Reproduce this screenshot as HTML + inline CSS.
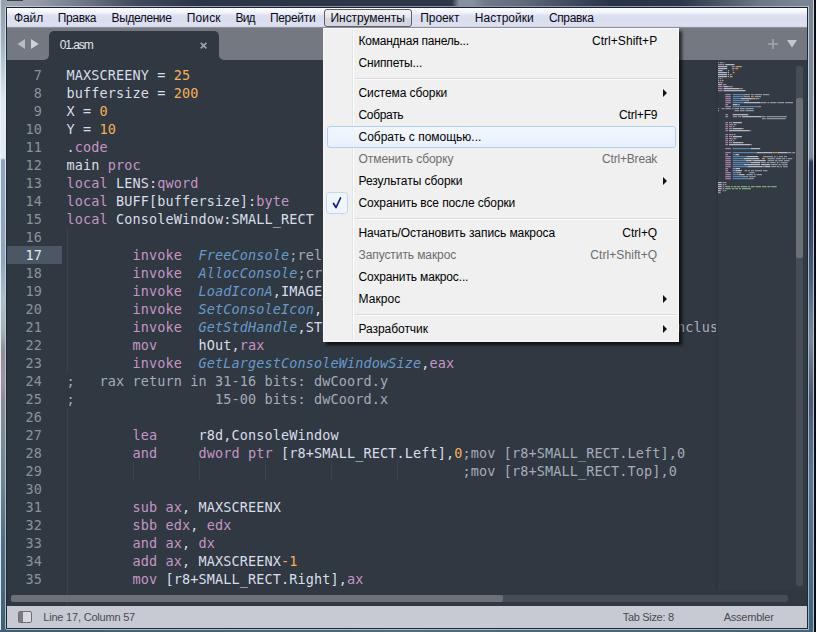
<!DOCTYPE html>
<html lang="ru">
<head>
<meta charset="utf-8">
<title>01.asm - Sublime Text</title>
<style>
html,body{margin:0;padding:0;}
body{width:816px;height:632px;overflow:hidden;position:relative;background:#303841;font-family:"Liberation Sans",sans-serif;font-size:12px;}
.a{position:absolute;}
.t{position:absolute;white-space:pre;line-height:14px;height:14px;}
#ftop{left:0;top:0;width:816px;height:6px;background:linear-gradient(90deg,#9ea6b0 0px,#959da8 35px,#6c7686 85px,#404a5e 135px,#2b3549 200px,#2e384a 452px,#8590a0 459px,#8590a0 473px,#6f798b 485px,#626c7e 520px,#3c465a 578px,#2a3448 612px,#2c364a 680px,#4a5568 720px,#6c7787 760px,#7a8594 800px,#7a8594 816px);}
#ftop2{left:6px;top:6px;width:803px;height:1px;background:linear-gradient(90deg,#c4ccd6 0px,#aab3c0 150px,#8792a6 300px,#8a96aa 600px,#b0b8c4 803px);}
#ftop3{left:6px;top:7px;width:802px;height:1px;background:#1a212c;}
#fleft{left:0;top:0;width:6px;height:632px;background:linear-gradient(180deg,#93a0ad 0px,#9fb0bf 40px,#c9d6e2 80px,#dde7f1 100px,#e3ecf5 158px,#8ea6c6 160px,#8da4c2 220px,#8fa5bd 260px,#a9c0cc 300px,#a8b4b4 330px,#8f8f92 350px,#a093a0 380px,#8c8a95 400px,#7a8a92 440px,#6d8794 480px,#4f6f84 540px,#3f6076 632px);}
#fleft0{left:0;top:0;width:1px;height:632px;background:linear-gradient(180deg,#cfd8e0 0,#eef3f8 100px,#e8eef5 300px,#dfe8ee 632px);}
#fleft2{left:5px;top:7px;width:1px;height:622px;background:linear-gradient(180deg,#c9d2dc 0,#e9f0f7 100px,#dbe6f0 160px,#b9c8da 300px,#a8bccb 632px);}
#fleft3{left:6px;top:7px;width:1px;height:622px;background:#1f2731;}
#fright{left:809px;top:0;width:4px;height:632px;background:linear-gradient(180deg,#7a8594 0px,#7c8797 60px,#7f8a9c 150px,#7986a0 158px,#2c3b5c 162px,#33425f 220px,#50607a 280px,#6b7c93 316px,#7a8894 340px,#5d6378 380px,#4e5672 400px,#566a84 440px,#5b7890 480px,#4d6f86 560px,#43657b 632px);}
#fright1{left:808px;top:6px;width:1px;height:624px;background:linear-gradient(180deg,#c3cad4 0,#c6ced9 150px,#a9b8d0 165px,#9fb0c8 632px);}
#fright0{left:807px;top:7px;width:1px;height:622px;background:#1f2731;}
#fright2{left:813px;top:0;width:1px;height:632px;background:linear-gradient(180deg,#c8cfd8 0,#d5dde8 150px,#b6c4dc 170px,#aebfd2 632px);}
#fright3{left:814px;top:0;width:2px;height:632px;background:#0b0e13;}
#fbot{left:0;top:630px;width:814px;height:2px;background:linear-gradient(90deg,#3d5f75,#4a6c82 400px,#43657b);}
#fbot1{left:6px;top:629px;width:803px;height:1px;background:#a9bdca;}
#fbot0{left:6px;top:628px;width:802px;height:1px;background:#1f2731;}
/* menubar */
#mbar{left:7px;top:8px;width:800px;height:18px;background:linear-gradient(180deg,#ffffff 0px,#f6f7fc 3px,#e9ecf7 6px,#dde1f1 7px,#d9deef 12px,#dce0f0 18px);}
#mbar1{left:7px;top:26px;width:800px;height:1px;background:#d2d5e2;}
#mbar2{left:7px;top:27px;width:800px;height:1px;background:#90939d;}
#mbtn{left:324px;top:9px;width:86px;height:16px;border:1px solid #5f6063;border-radius:3px;background:linear-gradient(180deg,#f4f4f6 0,#e6e7ec 45%,#d6d8e0 50%,#d4d6df 100%);box-sizing:content-box;}
/* tab bar */
#tabbar{left:7px;top:28px;width:800px;height:32px;background:#747981;}
#tab{left:49px;top:31px;width:170px;height:29px;background:#303841;border-radius:5px 5px 0 0;}
.tabfoot{width:5px;height:5px;top:55px;background:#303841;}
.tabfoot i{display:block;width:5px;height:5px;background:#747981;}
/* editor */
#ed{left:7px;top:60px;width:800px;height:546px;background:#303841;}
.code{font-family:"DejaVu Sans Mono","Liberation Mono",monospace;font-size:13.5px;letter-spacing:0.123px;line-height:18px;white-space:pre;color:#d8dee9;}
.code i{font-style:italic;color:#6699cc;}
.s{color:#99c794;} .r{color:#c695c6;} .k{color:#c695c6;} .n{color:#f9ae58;} .c{color:#a6acb9;}
.ln{position:absolute;left:7px;width:35px;text-align:right;height:18px;color:#8991a0;}
.cl{position:absolute;left:66.4px;height:18px;}
.g{position:absolute;width:1px;background-image:linear-gradient(180deg,#454d56 50%,rgba(0,0,0,0) 50%);background-size:1px 2px;}
.mm{transform-origin:0 0;transform:scale(0.11111);width:900px;font-weight:bold;}
/* status */
#status{left:7px;top:606px;width:800px;height:22px;background:#c7cad2;}
/* popup */
#pop{left:323px;top:28px;width:355.5px;height:314px;background:#f0f0f0;box-shadow:3px 3px 3px rgba(0,0,0,0.68);}
#popb{left:323px;top:28px;width:354px;height:312px;border:1px solid #f8f8f8;}
.sepv1{left:352px;top:31px;width:1px;height:308px;background:#e2e3e3;}
.sepv2{left:353px;top:31px;width:1px;height:308px;background:#ffffff;}
.seph{left:355px;width:321px;height:1px;background:#d9d9d9;border-bottom:1px solid #fcfcfc;}
.arr{width:0;height:0;border-left:4px solid #111;border-top:4px solid transparent;border-bottom:4px solid transparent;left:663px;}
#hl{left:327px;top:126px;width:347px;height:20px;border:1px solid #aecff7;border-radius:3px;background:linear-gradient(180deg,#f2f7fd,#e8f1fc);}
</style>
</head>
<body>
<div id="mbar" class="a"></div><div id="mbar1" class="a"></div><div id="mbar2" class="a"></div>
<div id="mbtn" class="a"></div>
<span class="t" style="left:14.10px;top:11.33px;font:12px 'Liberation Sans';line-height:14px;letter-spacing:-0.154px;color:#0a0a14;">Файл</span>
<span class="t" style="left:57.70px;top:11.33px;font:12px 'Liberation Sans';line-height:14px;letter-spacing:-0.341px;color:#0a0a14;">Правка</span>
<span class="t" style="left:111.60px;top:11.33px;font:12px 'Liberation Sans';line-height:14px;letter-spacing:-0.422px;color:#0a0a14;">Выделение</span>
<span class="t" style="left:186.80px;top:11.33px;font:12px 'Liberation Sans';line-height:14px;letter-spacing:0.127px;color:#0a0a14;">Поиск</span>
<span class="t" style="left:235.60px;top:11.33px;font:12px 'Liberation Sans';line-height:14px;letter-spacing:-0.873px;color:#0a0a14;">Вид</span>
<span class="t" style="left:269.90px;top:11.33px;font:12px 'Liberation Sans';line-height:14px;letter-spacing:-0.309px;color:#0a0a14;">Перейти</span>
<span class="t" style="left:330.50px;top:11.33px;font:12px 'Liberation Sans';line-height:14px;letter-spacing:-0.057px;color:#0a0a14;">Инструменты</span>
<span class="t" style="left:420.20px;top:11.33px;font:12px 'Liberation Sans';line-height:14px;letter-spacing:-0.055px;color:#0a0a14;">Проект</span>
<span class="t" style="left:474.80px;top:11.33px;font:12px 'Liberation Sans';line-height:14px;letter-spacing:0.006px;color:#0a0a14;">Настройки</span>
<span class="t" style="left:548.90px;top:11.33px;font:12px 'Liberation Sans';line-height:14px;letter-spacing:-0.354px;color:#0a0a14;">Справка</span>
<div id="tabbar" class="a"></div>
<div id="tab" class="a"></div>
<div class="a tabfoot" style="left:44px"><i style="border-radius:0 0 5px 0"></i></div>
<div class="a tabfoot" style="left:219px"><i style="border-radius:0 0 0 5px"></i></div>
<svg class="a" style="left:7px;top:28px" width="800" height="32" viewBox="7 28 800 32"><polygon points="17.5,44 25,39 25,49" fill="#b9bcc1"/><polygon points="38.7,44 31,39 31,49" fill="#cfd1d5"/><path d="M200.8 42.8 L206.4 48.4 M206.4 42.8 L200.8 48.4" stroke="#9ea2a8" stroke-width="1.7" fill="none"/><path d="M768 44 H778 M773 39 V49" stroke="#a3a7ad" stroke-width="1.6" fill="none"/><polygon points="787,40 797,40 792,47.6" fill="#c3c6ca"/></svg>
<span class="t" style="left:59.70px;top:37.63px;font:12px 'Liberation Sans';line-height:14px;letter-spacing:-1.060px;color:#e6e8ea;">01.asm</span>
<div id="ed" class="a"></div>
<div class="a" style="left:7px;top:246px;width:55px;height:18px;background:#4b5764"></div>
<div class="code a" style="left:0;top:60px;width:717px;height:546px;overflow:hidden"><div class="a" style="left:0;top:-60px">
<div class="ln" style="top:66px;color:#8a929e">7</div>
<div class="cl" style="top:66px">MAXSCREENY = <span class="n">25</span></div>
<div class="ln" style="top:84px;color:#8a929e">8</div>
<div class="cl" style="top:84px">buffersize = <span class="n">200</span></div>
<div class="ln" style="top:102px;color:#8a929e">9</div>
<div class="cl" style="top:102px">X = <span class="n">0</span></div>
<div class="ln" style="top:120px;color:#8a929e">10</div>
<div class="cl" style="top:120px">Y = <span class="n">10</span></div>
<div class="ln" style="top:138px;color:#8a929e">11</div>
<div class="cl" style="top:138px">.<span class="k">code</span></div>
<div class="ln" style="top:156px;color:#8a929e">12</div>
<div class="cl" style="top:156px">main <span class="k">proc</span></div>
<div class="ln" style="top:174px;color:#8a929e">13</div>
<div class="cl" style="top:174px"><span class="k">local</span> LENS:<span class="k">qword</span></div>
<div class="ln" style="top:192px;color:#8a929e">14</div>
<div class="cl" style="top:192px"><span class="k">local</span> BUFF[buffersize]:<span class="k">byte</span></div>
<div class="ln" style="top:210px;color:#8a929e">15</div>
<div class="cl" style="top:210px"><span class="k">local</span> ConsoleWindow:SMALL_RECT</div>
<div class="ln" style="top:228px;color:#8a929e">16</div>
<div class="ln" style="top:246px;color:#e3e8ef">17</div>
<div class="cl" style="top:246px">        <span class="k">invoke</span>  <i>FreeConsole</i><span class="c">;release the existing console</span></div>
<div class="ln" style="top:264px;color:#8a929e">18</div>
<div class="cl" style="top:264px">        <span class="k">invoke</span>  <i>AllocConsole</i><span class="c">;create new console</span></div>
<div class="ln" style="top:282px;color:#8a929e">19</div>
<div class="cl" style="top:282px">        <span class="k">invoke</span>  <i>LoadIconA</i>,IMAGE_BASE,<span class="n">1000</span><span class="c">;ico</span></div>
<div class="ln" style="top:300px;color:#8a929e">20</div>
<div class="cl" style="top:300px">        <span class="k">invoke</span>  <i>SetConsoleIcon</i>,<span class="r">rax</span></div>
<div class="ln" style="top:318px;color:#8a929e">21</div>
<div class="cl" style="top:318px">        <span class="k">invoke</span>  <i>GetStdHandle</i>,STD_OUTPUT_HANDLE<span class="c">;handle to console output, inclusive</span></div>
<div class="ln" style="top:336px;color:#8a929e">22</div>
<div class="cl" style="top:336px">        <span class="k">mov</span>     hOut,<span class="r">rax</span></div>
<div class="ln" style="top:354px;color:#8a929e">23</div>
<div class="cl" style="top:354px">        <span class="k">invoke</span>  <i>GetLargestConsoleWindowSize</i>,<span class="r">eax</span></div>
<div class="ln" style="top:372px;color:#8a929e">24</div>
<div class="cl" style="top:372px"><span class="c">;   rax return in 31-16 bits: dwCoord.y</span></div>
<div class="ln" style="top:390px;color:#8a929e">25</div>
<div class="cl" style="top:390px"><span class="c">;                 15-00 bits: dwCoord.x</span></div>
<div class="ln" style="top:408px;color:#8a929e">26</div>
<div class="ln" style="top:426px;color:#8a929e">27</div>
<div class="cl" style="top:426px">        <span class="k">lea</span>     r8d,ConsoleWindow</div>
<div class="ln" style="top:444px;color:#8a929e">28</div>
<div class="cl" style="top:444px">        <span class="k">and</span>     <span class="k">dword</span> <span class="k">ptr</span> [r8+SMALL_RECT.Left],<span class="n">0</span><span class="c">;mov [r8+SMALL_RECT.Left],0</span></div>
<div class="ln" style="top:462px;color:#8a929e">29</div>
<div class="cl" style="top:462px">                                                <span class="c">;mov [r8+SMALL_RECT.Top],0</span></div>
<div class="ln" style="top:480px;color:#8a929e">30</div>
<div class="ln" style="top:498px;color:#8a929e">31</div>
<div class="cl" style="top:498px">        <span class="k">sub</span> <span class="r">ax</span>, MAXSCREENX</div>
<div class="ln" style="top:516px;color:#8a929e">32</div>
<div class="cl" style="top:516px">        <span class="k">sbb</span> <span class="r">edx</span>, <span class="r">edx</span></div>
<div class="ln" style="top:534px;color:#8a929e">33</div>
<div class="cl" style="top:534px">        <span class="k">and</span> <span class="r">ax</span>, <span class="r">dx</span></div>
<div class="ln" style="top:552px;color:#8a929e">34</div>
<div class="cl" style="top:552px">        <span class="k">add</span> <span class="r">ax</span>, MAXSCREENX<span class="n">-1</span></div>
<div class="ln" style="top:570px;color:#8a929e">35</div>
<div class="cl" style="top:570px">        <span class="k">mov</span> [r8+SMALL_RECT.Right],<span class="r">ax</span></div>
</div></div>
<div class="g" style="left:67px;top:228px;height:144px"></div>
<div class="g" style="left:67px;top:408px;height:198px"></div>
<div class="g" style="left:133px;top:462px;height:18px"></div>
<div class="g" style="left:199px;top:462px;height:18px"></div>
<div class="g" style="left:265px;top:462px;height:18px"></div>
<div class="g" style="left:331px;top:462px;height:18px"></div>
<div class="g" style="left:397px;top:462px;height:18px"></div>
<div class="a" style="left:718px;top:60px;width:89px;height:530px;background:#323a43"></div>
<div class="a" style="left:715.5px;top:60px;width:2.5px;height:530px;background:#2c343c"></div>
<svg class="a" style="left:717px;top:60px;opacity:0.78" width="80" height="140" viewBox="717 60 80 140"><path fill="#d8dee9" d="M725.3 64h9.2v1.25h-9.2zM718.0 66h9.2v1.25h-9.2zM718.0 68h9.2v1.25h-9.2zM718.0 70h4.6v1.25h-4.6zM728.1 70h0.9v1.25h-0.9zM718.0 72h9.2v1.25h-9.2zM728.1 72h0.9v1.25h-0.9zM718.0 74h9.2v1.25h-9.2zM728.1 74h0.9v1.25h-0.9zM718.0 76h9.2v1.25h-9.2zM728.1 76h0.9v1.25h-0.9zM718.0 78h0.9v1.25h-0.9zM719.8 78h0.9v1.25h-0.9zM718.0 80h0.9v1.25h-0.9zM719.8 80h0.9v1.25h-0.9zM718.0 82h0.9v1.25h-0.9zM718.0 84h3.7v1.25h-3.7zM723.5 86h4.6v1.25h-4.6zM723.5 88h15.6v1.25h-15.6zM723.5 90h22.0v1.25h-22.0zM740.9 98h11.0v1.25h-11.0zM745.5 100h0.9v1.25h-0.9zM743.7 102h16.5v1.25h-16.5zM732.7 104h4.6v1.25h-4.6zM757.4 106h0.9v1.25h-0.9zM732.7 114h15.6v1.25h-15.6zM741.8 116h19.2v1.25h-19.2zM730.8 122h0.9v1.25h-0.9zM732.7 122h9.2v1.25h-9.2zM731.8 124h0.9v1.25h-0.9zM730.8 126h0.9v1.25h-0.9zM730.8 128h0.9v1.25h-0.9zM732.7 128h9.2v1.25h-9.2zM729.0 130h20.2v1.25h-20.2zM731.8 134h0.9v1.25h-0.9zM730.8 136h0.9v1.25h-0.9zM732.7 136h9.2v1.25h-9.2zM731.8 138h0.9v1.25h-0.9zM730.8 140h0.9v1.25h-0.9zM730.8 142h0.9v1.25h-0.9zM732.7 142h9.2v1.25h-9.2zM729.0 144h21.1v1.25h-21.1zM751.0 148h9.2v1.25h-9.2zM756.5 152h15.6v1.25h-15.6zM777.6 152h10.1v1.25h-10.1zM735.4 154h3.7v1.25h-3.7zM746.4 156h11.9v1.25h-11.9zM743.7 158h15.6v1.25h-15.6zM745.5 160h5.5v1.25h-5.5zM753.8 160h11.9v1.25h-11.9zM751.0 162h9.2v1.25h-9.2zM743.7 164h16.5v1.25h-16.5zM761.1 164h9.2v1.25h-9.2zM747.3 166h14.7v1.25h-14.7zM764.8 166h5.5v1.25h-5.5zM735.4 168h4.6v1.25h-4.6zM735.4 170h6.4v1.25h-6.4zM737.2 172h0.9v1.25h-0.9zM739.1 174h5.5v1.25h-5.5zM749.2 178h0.9v1.25h-0.9zM718.0 182h3.7v1.25h-3.7zM718.0 184h3.7v1.25h-3.7zM725.3 184h0.9v1.25h-0.9zM718.0 186h3.7v1.25h-3.7zM774.8 186h0.9v1.25h-0.9zM718.0 188h3.7v1.25h-3.7zM749.2 188h0.9v1.25h-0.9zM718.0 190h2.8v1.25h-2.8zM725.3 190h0.9v1.25h-0.9z"/><path fill="#c695c6" d="M746.4 100h2.8v1.25h-2.8zM737.2 104h2.8v1.25h-2.8zM758.3 106h2.8v1.25h-2.8zM729.0 122h1.8v1.25h-1.8zM729.0 124h2.8v1.25h-2.8zM733.6 124h2.8v1.25h-2.8zM729.0 126h1.8v1.25h-1.8zM732.7 126h1.8v1.25h-1.8zM729.0 128h1.8v1.25h-1.8zM749.2 130h1.8v1.25h-1.8zM729.0 134h2.8v1.25h-2.8zM729.0 136h1.8v1.25h-1.8zM729.0 138h2.8v1.25h-2.8zM733.6 138h2.8v1.25h-2.8zM729.0 140h1.8v1.25h-1.8zM732.7 140h1.8v1.25h-1.8zM729.0 142h1.8v1.25h-1.8zM750.1 144h1.8v1.25h-1.8zM751.0 160h2.8v1.25h-2.8zM762.0 166h2.8v1.25h-2.8zM732.7 168h2.8v1.25h-2.8zM732.7 170h2.8v1.25h-2.8z"/><path fill="#c695c6" d="M718.0 64h6.4v1.25h-6.4zM731.8 66h2.8v1.25h-2.8zM731.8 68h2.8v1.25h-2.8zM718.9 82h3.7v1.25h-3.7zM722.6 84h3.7v1.25h-3.7zM718.0 86h4.6v1.25h-4.6zM728.1 86h4.6v1.25h-4.6zM718.0 88h4.6v1.25h-4.6zM739.1 88h3.7v1.25h-3.7zM718.0 90h4.6v1.25h-4.6zM725.3 94h5.5v1.25h-5.5zM725.3 96h5.5v1.25h-5.5zM725.3 98h5.5v1.25h-5.5zM725.3 100h5.5v1.25h-5.5zM725.3 102h5.5v1.25h-5.5zM725.3 104h2.8v1.25h-2.8zM725.3 106h5.5v1.25h-5.5zM725.3 114h2.8v1.25h-2.8zM725.3 116h2.8v1.25h-2.8zM732.7 116h4.6v1.25h-4.6zM738.2 116h2.8v1.25h-2.8zM725.3 122h2.8v1.25h-2.8zM725.3 124h2.8v1.25h-2.8zM725.3 126h2.8v1.25h-2.8zM725.3 128h2.8v1.25h-2.8zM725.3 130h2.8v1.25h-2.8zM725.3 134h2.8v1.25h-2.8zM725.3 136h2.8v1.25h-2.8zM725.3 138h2.8v1.25h-2.8zM725.3 140h2.8v1.25h-2.8zM725.3 142h2.8v1.25h-2.8zM725.3 144h2.8v1.25h-2.8zM725.3 148h5.5v1.25h-5.5zM725.3 152h5.5v1.25h-5.5zM725.3 154h2.8v1.25h-2.8zM725.3 156h5.5v1.25h-5.5zM725.3 158h5.5v1.25h-5.5zM725.3 160h5.5v1.25h-5.5zM725.3 162h5.5v1.25h-5.5zM725.3 164h5.5v1.25h-5.5zM725.3 166h5.5v1.25h-5.5zM725.3 168h2.8v1.25h-2.8zM725.3 170h2.8v1.25h-2.8zM725.3 172h5.5v1.25h-5.5zM725.3 174h5.5v1.25h-5.5zM725.3 176h5.5v1.25h-5.5zM725.3 178h5.5v1.25h-5.5zM750.1 178h3.7v1.25h-3.7zM722.6 182h3.7v1.25h-3.7zM722.6 184h1.8v1.25h-1.8zM722.6 186h1.8v1.25h-1.8zM722.6 188h1.8v1.25h-1.8zM722.6 190h1.8v1.25h-1.8zM718.0 192h2.8v1.25h-2.8z"/><path fill="#f9ae58" d="M735.4 66h6.4v1.25h-6.4zM735.4 68h2.8v1.25h-2.8zM732.7 70h0.9v1.25h-0.9zM732.7 72h1.8v1.25h-1.8zM729.9 74h1.8v1.25h-1.8zM729.9 76h2.8v1.25h-2.8zM721.7 78h0.9v1.25h-0.9zM721.7 80h1.8v1.25h-1.8zM751.9 98h3.7v1.25h-3.7zM761.1 116h0.9v1.25h-0.9zM741.8 128h1.8v1.25h-1.8zM733.6 134h1.8v1.25h-1.8zM741.8 142h1.8v1.25h-1.8zM772.1 152h5.5v1.25h-5.5zM762.0 158h2.8v1.25h-2.8zM738.2 172h2.8v1.25h-2.8zM775.8 186h0.9v1.25h-0.9zM750.1 188h0.9v1.25h-0.9z"/><path fill="#a6acb9" d="M718.0 62h0.9v1.25h-0.9zM719.8 62h2.8v1.25h-2.8zM723.5 62h0.9v1.25h-0.9zM742.8 94h7.3v1.25h-7.3zM751.0 94h2.8v1.25h-2.8zM754.7 94h7.3v1.25h-7.3zM762.9 94h6.4v1.25h-6.4zM743.7 96h6.4v1.25h-6.4zM751.0 96h2.8v1.25h-2.8zM754.7 96h6.4v1.25h-6.4zM755.6 98h3.7v1.25h-3.7zM760.2 102h6.4v1.25h-6.4zM767.5 102h1.8v1.25h-1.8zM770.2 102h6.4v1.25h-6.4zM777.6 102h6.4v1.25h-6.4zM784.9 102h8.2v1.25h-8.2zM718.0 108h0.9v1.25h-0.9zM721.7 108h2.8v1.25h-2.8zM725.3 108h5.5v1.25h-5.5zM731.8 108h1.8v1.25h-1.8zM734.5 108h4.6v1.25h-4.6zM740.0 108h4.6v1.25h-4.6zM745.5 108h8.2v1.25h-8.2zM718.0 110h0.9v1.25h-0.9zM734.5 110h4.6v1.25h-4.6zM740.0 110h4.6v1.25h-4.6zM745.5 110h8.2v1.25h-8.2zM762.0 116h3.7v1.25h-3.7zM766.6 116h20.2v1.25h-20.2zM762.0 118h3.7v1.25h-3.7zM766.6 118h19.2v1.25h-19.2zM787.7 152h3.7v1.25h-3.7zM792.2 152h2.8v1.25h-2.8zM762.9 156h10.1v1.25h-10.1zM773.9 156h1.8v1.25h-1.8zM776.7 156h0.9v1.25h-0.9zM778.5 156h4.6v1.25h-4.6zM784.0 156h2.8v1.25h-2.8zM767.5 158h7.3v1.25h-7.3zM775.8 158h5.5v1.25h-5.5zM782.2 158h2.8v1.25h-2.8zM785.8 158h0.9v1.25h-0.9zM787.7 158h4.6v1.25h-4.6zM767.5 160h6.4v1.25h-6.4zM774.8 160h2.8v1.25h-2.8zM778.5 160h4.6v1.25h-4.6zM784.0 160h5.5v1.25h-5.5zM761.1 162h4.6v1.25h-4.6zM766.6 162h2.8v1.25h-2.8zM770.2 162h5.5v1.25h-5.5zM776.7 162h1.8v1.25h-1.8zM779.4 162h0.9v1.25h-0.9zM781.2 162h6.4v1.25h-6.4zM771.2 164h6.4v1.25h-6.4zM778.5 164h2.8v1.25h-2.8zM782.2 164h5.5v1.25h-5.5zM771.2 166h4.6v1.25h-4.6zM776.7 166h2.8v1.25h-2.8zM780.3 166h1.8v1.25h-1.8zM783.1 166h4.6v1.25h-4.6zM744.6 170h2.8v1.25h-2.8zM748.2 170h1.8v1.25h-1.8zM751.0 170h2.8v1.25h-2.8zM754.7 170h7.3v1.25h-7.3zM762.9 170h4.6v1.25h-4.6zM749.2 172h5.5v1.25h-5.5zM746.4 174h6.4v1.25h-6.4zM753.8 174h1.8v1.25h-1.8zM756.5 174h5.5v1.25h-5.5zM742.8 176h5.5v1.25h-5.5zM749.2 176h6.4v1.25h-6.4z"/><path fill="#6699cc" d="M732.7 94h10.1v1.25h-10.1zM732.7 96h11.0v1.25h-11.0zM732.7 98h8.2v1.25h-8.2zM732.7 100h12.8v1.25h-12.8zM732.7 102h11.0v1.25h-11.0zM732.7 106h24.8v1.25h-24.8zM732.7 148h18.3v1.25h-18.3zM732.7 152h23.8v1.25h-23.8zM732.7 154h2.8v1.25h-2.8zM732.7 156h13.8v1.25h-13.8zM732.7 158h11.0v1.25h-11.0zM732.7 160h12.8v1.25h-12.8zM732.7 162h18.3v1.25h-18.3zM732.7 164h11.0v1.25h-11.0zM732.7 166h14.7v1.25h-14.7zM732.7 172h4.6v1.25h-4.6zM732.7 174h6.4v1.25h-6.4zM732.7 176h10.1v1.25h-10.1zM732.7 178h16.5v1.25h-16.5z"/><path fill="#99c794" d="M725.3 186h4.6v1.25h-4.6zM730.8 186h1.8v1.25h-1.8zM733.6 186h2.8v1.25h-2.8zM737.2 186h2.8v1.25h-2.8zM740.9 186h6.4v1.25h-6.4zM748.2 186h1.8v1.25h-1.8zM751.0 186h3.7v1.25h-3.7zM755.6 186h5.5v1.25h-5.5zM762.0 186h4.6v1.25h-4.6zM767.5 186h2.8v1.25h-2.8zM771.2 186h3.7v1.25h-3.7zM725.3 188h5.5v1.25h-5.5zM731.8 188h2.8v1.25h-2.8zM735.4 188h2.8v1.25h-2.8zM739.1 188h1.8v1.25h-1.8zM741.8 188h7.3v1.25h-7.3z"/></svg>
<div class="a" style="left:796px;top:66px;width:7px;height:520px;border-radius:2.5px;background:#464d56"></div>
<div class="a" style="left:796px;top:98px;width:7px;height:160px;border-radius:2.5px;background:#6c7178"></div>
<div class="a" style="left:11px;top:595px;width:777px;height:7px;border-radius:2.5px;background:#464d56"></div>
<div class="a" style="left:11px;top:595px;width:492px;height:7px;border-radius:2.5px;background:#6c7178"></div>
<div id="status" class="a"></div>
<svg class="a" style="left:17px;top:609px" width="18" height="16" viewBox="17 609 18 16"><rect x="18.5" y="611.5" width="13" height="11" rx="1.5" fill="#d8dade" stroke="#6d6f74" stroke-width="1"/><path d="M19 612.5 a0.5 0.5 0 0 1 0.5 -0.5 H23 V622 H19.5 a0.5 0.5 0 0 1 -0.5 -0.5 Z" fill="#797b80"/></svg>
<span class="t" style="left:43.30px;top:609.66px;font:11px 'Liberation Sans';line-height:14px;letter-spacing:-0.206px;color:#4a4c50;">Line 17, Column 57</span>
<span class="t" style="left:622.70px;top:609.66px;font:11px 'Liberation Sans';line-height:14px;letter-spacing:-0.311px;color:#4a4c50;">Tab Size: 8</span>
<span class="t" style="left:723.70px;top:609.66px;font:11px 'Liberation Sans';line-height:14px;letter-spacing:-0.219px;color:#4a4c50;">Assembler</span>
<div id="pop" class="a"></div><div id="popb" class="a"></div><div class="a sepv1"></div><div class="a sepv2"></div>
<div id="hl" class="a"></div>
<div class="a seph" style="top:78px"></div>
<div class="a seph" style="top:218px"></div>
<div class="a seph" style="top:314px"></div>
<span class="t" style="left:358.50px;top:34.03px;font:12px 'Liberation Sans';line-height:14px;letter-spacing:-0.231px;color:#000;">Командная панель...</span>
<span class="t" style="left:592.00px;top:33.83px;font:12px 'Liberation Sans';line-height:14px;letter-spacing:0.041px;color:#000;">Ctrl+Shift+P</span>
<span class="t" style="left:358.50px;top:56.03px;font:12px 'Liberation Sans';line-height:14px;letter-spacing:-0.163px;color:#000;">Сниппеты...</span>
<span class="t" style="left:358.50px;top:86.03px;font:12px 'Liberation Sans';line-height:14px;letter-spacing:-0.082px;color:#000;">Система сборки</span>
<div class="a arr" style="top:88.5px"></div>
<span class="t" style="left:358.50px;top:108.03px;font:12px 'Liberation Sans';line-height:14px;letter-spacing:-0.321px;color:#000;">Собрать</span>
<span class="t" style="left:619.10px;top:107.83px;font:12px 'Liberation Sans';line-height:14px;letter-spacing:-0.227px;color:#000;">Ctrl+F9</span>
<span class="t" style="left:358.50px;top:130.03px;font:12px 'Liberation Sans';line-height:14px;letter-spacing:-0.007px;color:#000;">Собрать с помощью...</span>
<span class="t" style="left:358.50px;top:152.03px;font:12px 'Liberation Sans';line-height:14px;letter-spacing:-0.052px;color:#6d6d6d;">Отменить сборку</span>
<span class="t" style="left:602.10px;top:151.83px;font:12px 'Liberation Sans';line-height:14px;letter-spacing:-0.193px;color:#6d6d6d;">Ctrl+Break</span>
<span class="t" style="left:358.50px;top:174.03px;font:12px 'Liberation Sans';line-height:14px;letter-spacing:-0.048px;color:#000;">Результаты сборки</span>
<div class="a arr" style="top:176.5px"></div>
<span class="t" style="left:358.50px;top:196.03px;font:12px 'Liberation Sans';line-height:14px;letter-spacing:-0.111px;color:#000;">Сохранить все после сборки</span>
<span class="t" style="left:358.50px;top:226.03px;font:12px 'Liberation Sans';line-height:14px;letter-spacing:-0.069px;color:#000;">Начать/Остановить запись макроса</span>
<span class="t" style="left:622.30px;top:225.83px;font:12px 'Liberation Sans';line-height:14px;letter-spacing:-0.019px;color:#000;">Ctrl+Q</span>
<span class="t" style="left:358.50px;top:248.03px;font:12px 'Liberation Sans';line-height:14px;letter-spacing:-0.087px;color:#6d6d6d;">Запустить макрос</span>
<span class="t" style="left:590.30px;top:247.83px;font:12px 'Liberation Sans';line-height:14px;letter-spacing:0.072px;color:#6d6d6d;">Ctrl+Shift+Q</span>
<span class="t" style="left:358.50px;top:270.03px;font:12px 'Liberation Sans';line-height:14px;letter-spacing:-0.142px;color:#000;">Сохранить макрос...</span>
<span class="t" style="left:358.50px;top:292.03px;font:12px 'Liberation Sans';line-height:14px;letter-spacing:0.082px;color:#000;">Макрос</span>
<div class="a arr" style="top:294.5px"></div>
<span class="t" style="left:358.50px;top:322.03px;font:12px 'Liberation Sans';line-height:14px;letter-spacing:-0.053px;color:#000;">Разработчик</span>
<div class="a arr" style="top:324.5px"></div>
<svg class="a" style="left:326px;top:192px" width="24" height="22" viewBox="0 0 24 22"><rect x="0.5" y="0.5" width="21" height="21" rx="3" fill="#f0f4fb" stroke="#c0d6f4"/><path d="M7.5 11.5 L10 15.5 L14.5 6" stroke="#0c1a8a" stroke-width="1.7" fill="none" stroke-linecap="round" stroke-linejoin="round"/></svg>
<div id="ftop" class="a"></div><div id="fleft" class="a"></div><div id="fleft0" class="a"></div><div id="fright" class="a"></div><div id="fbot" class="a"></div>
<div class="a" style="left:7px;top:0;width:15.5px;height:1px;background:#3d424a"></div>
<div id="ftop2" class="a"></div><div id="ftop3" class="a"></div><div id="fleft2" class="a"></div><div id="fleft3" class="a"></div>
<div id="fright0" class="a"></div><div id="fright1" class="a"></div><div id="fright2" class="a"></div><div id="fright3" class="a"></div><div id="fbot0" class="a"></div><div id="fbot1" class="a"></div>
</body>
</html>
